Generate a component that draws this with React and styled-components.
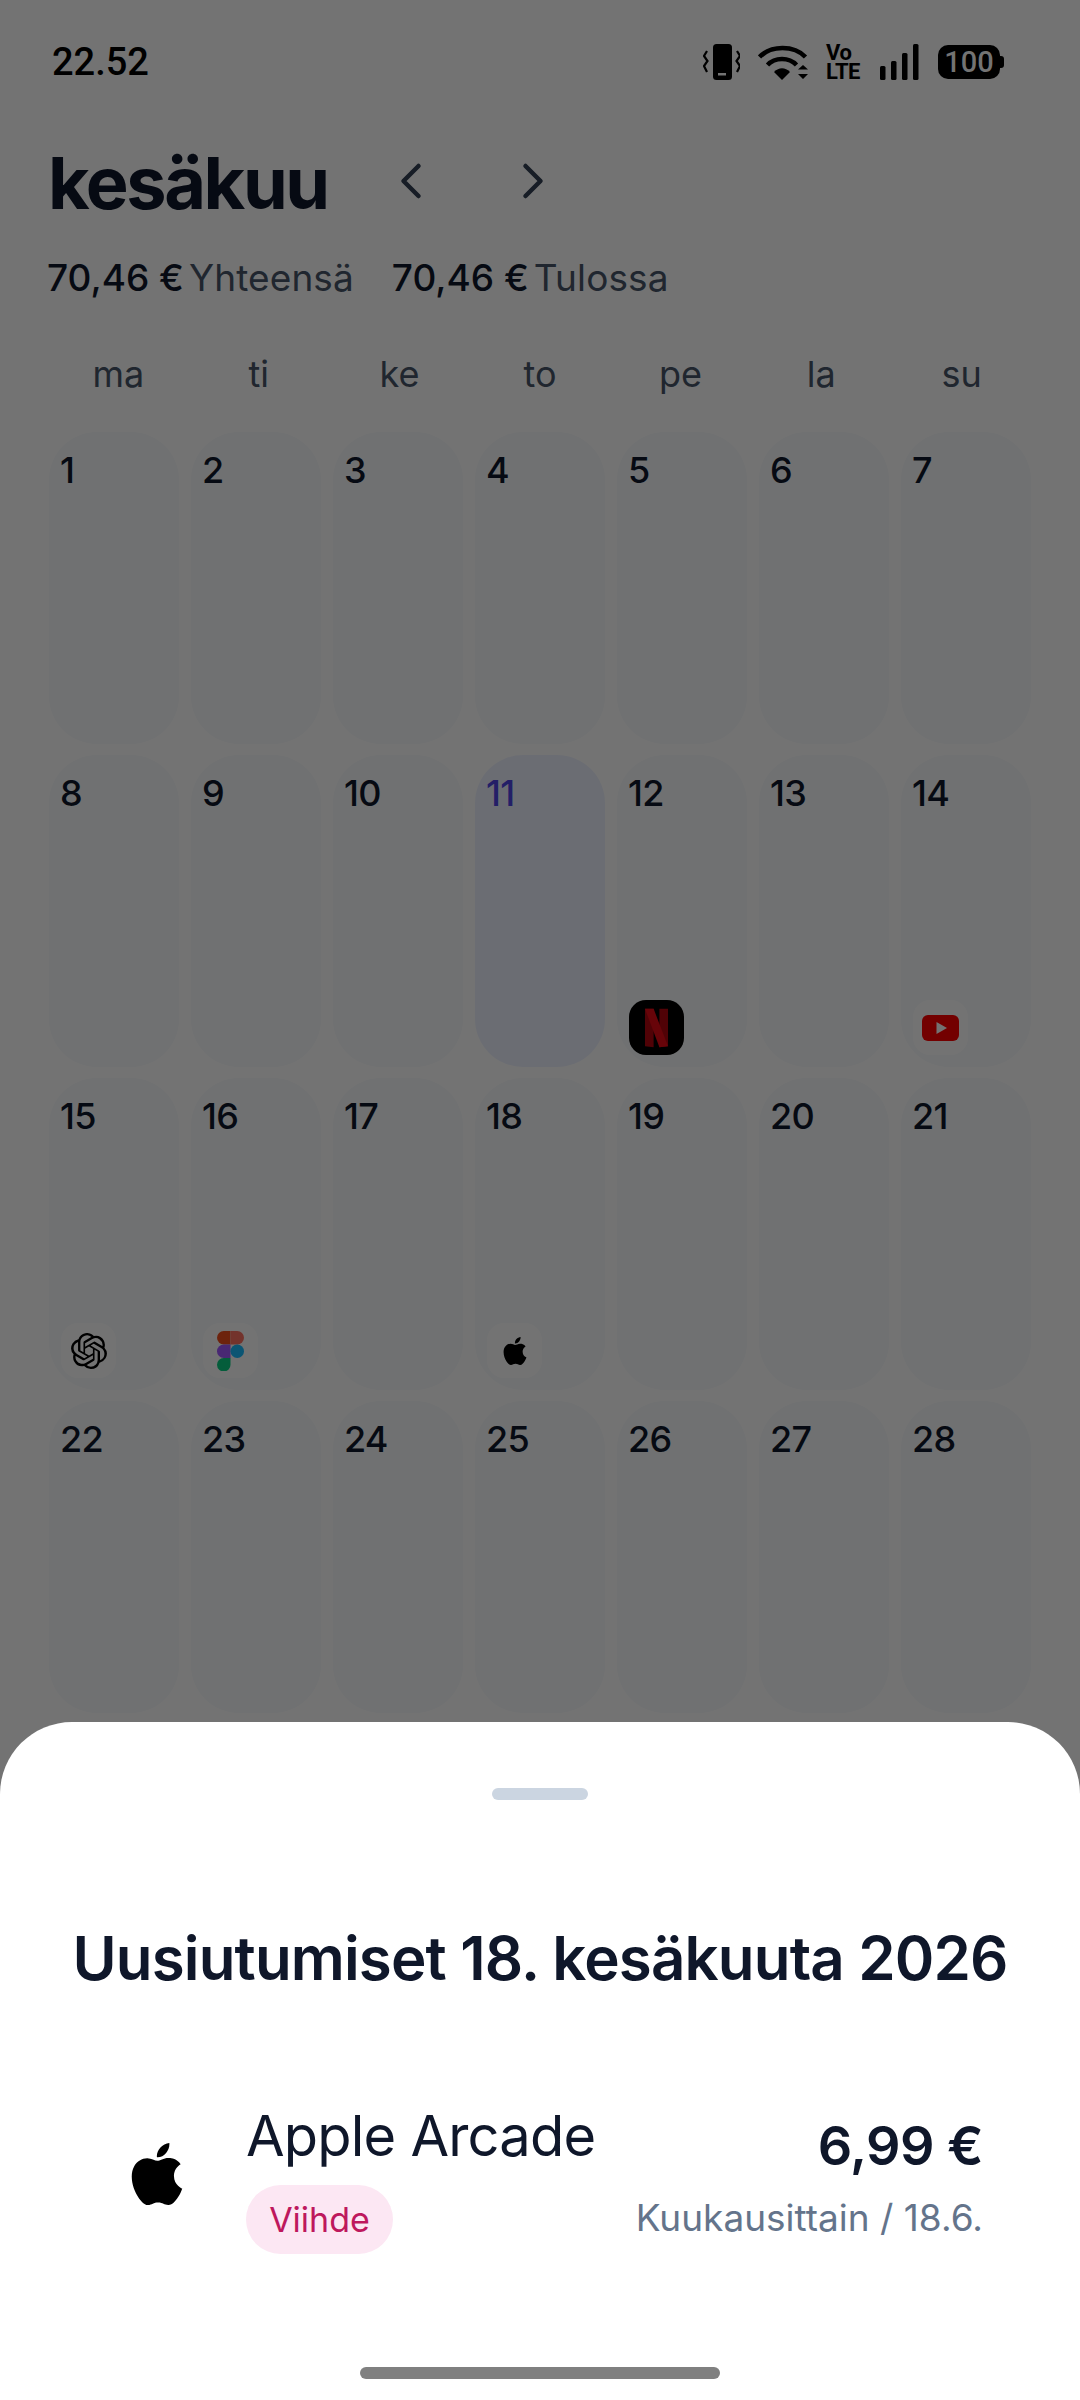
import React from 'react'
import styled, { createGlobalStyle } from 'styled-components'
import { ChevronLeft, ChevronRight } from 'lucide-react'
import { SiApple, SiOpenai } from 'react-icons/si'

const GlobalStyle = createGlobalStyle`
  html, body { margin: 0; padding: 0; background: #fff; }
  * { box-sizing: border-box; }
`

const Screen = styled.div`
  position: relative;
  width: 1080px;
  height: 2400px;
  overflow: hidden;
  background: #fff;
  font-family: Inter, "Noto Sans", sans-serif;
  color: #0f172a;
`

// sits above the dimmed backdrop, the system bar is not dimmed
const StatusBar = styled.div`
  position: relative;
  z-index: 1;
  display: flex;
  align-items: center;
  justify-content: space-between;
  height: 124px;
  padding: 0 76px 0 52px;
`

const Time = styled.span`
  font-family: Roboto, sans-serif;
  font-size: 38px;
  font-weight: 500;
  color: #000;
`

const StatusIcons = styled.div`
  display: flex;
  align-items: center;
  gap: 18px;
  color: #000;
`

const VoLte = styled.span`
  display: flex;
  flex-direction: column;
  align-items: flex-start;
  font-family: Roboto, sans-serif;
  font-size: 22px;
  font-weight: 700;
  line-height: 19px;
  letter-spacing: -0.5px;
  width: 36px;
`

const Battery = styled.span`
  position: relative;
  display: flex;
  align-items: center;
  justify-content: center;
  width: 62px;
  height: 34px;
  margin: 0 4px 0 1px;
  border-radius: 10px;
  background: #000;
  color: #737373;
  font-family: Roboto, sans-serif;
  font-size: 29px;
  font-weight: 500;

  &::after {
    content: '';
    position: absolute;
    right: -4px;
    top: 11px;
    width: 4px;
    height: 12px;
    border-radius: 0 3px 3px 0;
    background: #000;
  }
`

const MonthRow = styled.div`
  display: flex;
  align-items: center;
  height: 116px;
  padding-left: 48px;
`

const MonthTitle = styled.h1`
  width: 333px;
  margin: 0;
  font-size: 72px;
  font-weight: 700;
  letter-spacing: -2.4px;
  color: #0f172a;
`

const NavButton = styled.span`
  display: flex;
  width: 122px;
  margin-top: -2px;
  color: #334155;
`

const Summary = styled.div`
  display: flex;
  gap: 38px;
  height: 56px;
  padding: 14px 0 0 47px;
  font-size: 37px;
  line-height: 48px;
`

const SummaryItem = styled.div`
  display: flex;
  gap: 5px;
`

const Amount = styled.span`
  font-weight: 500;
`

const SummaryLabel = styled.span`
  color: #475569;
  letter-spacing: 0.1px;
`

const WeekRow = styled.div`
  display: grid;
  grid-template-columns: repeat(7, 1fr);
  height: 136px;
  padding: 56px 48px 0;
`

const WeekDay = styled.span`
  font-size: 36px;
  line-height: 44px;
  text-align: center;
  color: #475569;
`

const CalendarGrid = styled.div`
  display: grid;
  grid-template-columns: repeat(7, 130px);
  grid-auto-rows: 312px;
  gap: 11px 12px;
  padding-left: 49px;
`

const DayCell = styled.div`
  display: flex;
  flex-direction: column;
  justify-content: space-between;
  padding: 12px;
  border-radius: 48px;
  background: ${p => (p.$today ? '#eef2ff' : '#f8fafc')};
`

const DayNumber = styled.span`
  margin: 6px 0 0 -1px;
  font-size: 36px;
  font-weight: 500;
  line-height: 40px;
  letter-spacing: -0.8px;
  color: ${p => (p.$today ? '#4f46e5' : '#0f172a')};
`

const IconTile = styled.span`
  display: flex;
  align-items: center;
  justify-content: center;
  width: 55px;
  height: 55px;
  border-radius: 17px;
  background: ${p => p.$bg || '#ffffff'};
  color: #000;
`

const Backdrop = styled.div`
  position: absolute;
  inset: 0;
  background: rgba(0, 0, 0, 0.55);
`

const Sheet = styled.section`
  position: absolute;
  left: 0;
  right: 0;
  bottom: 0;
  display: flex;
  flex-direction: column;
  height: 678px;
  border-radius: 72px 72px 0 0;
  background: #fff;
`

const Handle = styled.div`
  align-self: center;
  width: 96px;
  height: 12px;
  margin-top: 66px;
  border-radius: 6px;
  background: #cbd5e1;
`

const SheetTitle = styled.h2`
  margin: 122px 0 0;
  font-size: 60px;
  font-weight: 575;
  line-height: 72px;
  letter-spacing: -0.85px;
  text-align: center;
  color: #0f172a;
`

const RenewalRow = styled.div`
  display: flex;
  align-items: flex-start;
  margin-top: 109px;
  padding: 0 97px 0 126px;
`

const RenewalIcon = styled.span`
  display: flex;
  width: 120px;
  margin-top: 40px;
  color: #000;
`

const RenewalInfo = styled.div`
  display: flex;
  flex-direction: column;
  align-items: flex-start;
`

const RenewalName = styled.span`
  font-size: 56px;
  line-height: 66px;
  letter-spacing: -0.8px;
  color: #0f172a;
`

const CategoryPill = styled.span`
  display: flex;
  align-items: center;
  justify-content: center;
  width: 147px;
  height: 69px;
  margin-top: 16px;
  border-radius: 35px;
  background: #fce7f3;
  color: #be185d;
  font-size: 34px;
`

const PriceInfo = styled.div`
  display: flex;
  flex-direction: column;
  align-items: flex-end;
  margin-left: auto;
`

const Price = styled.span`
  font-size: 54px;
  font-weight: 600;
  line-height: 66px;
  margin-top: 10px;
  letter-spacing: -0.6px;
  color: #0f172a;
`

const Cycle = styled.span`
  margin-top: 17px;
  font-size: 37px;
  line-height: 44px;
  color: #64748b;
`

const HomeBar = styled.div`
  align-self: center;
  width: 360px;
  height: 12px;
  margin-top: auto;
  margin-bottom: 21px;
  border-radius: 6px;
  background: #808080;
`

const VibrateIcon = () => (
  <svg width="37" height="36" viewBox="0 0 37 36">
    <rect x="10" y="0" width="19" height="36" rx="3.500" fill="currentColor" />
    <rect x="15" y="29" width="8" height="2.500" fill="#737373" />
    <path d="M4 7 L1 12 L4.500 17 L1 22 L4 28 M34 7 L37 12 L33.500 17 L37 22 L34 28" fill="none" stroke="currentColor" strokeWidth="2.200" />
  </svg>
)

const WifiIcon = () => (
  <svg width="50" height="37" viewBox="0 0 50 37">
    <path d="M1.500 13 C 13 1, 36 1, 47.500 13" fill="none" stroke="currentColor" strokeWidth="4.500" />
    <path d="M9.500 21 C 17 13, 31 13, 38.500 21" fill="none" stroke="currentColor" strokeWidth="4.500" />
    <path d="M16 28 L24 36 L32 28 C 27 23, 21 23, 16 28 Z" fill="currentColor" />
    <path d="M40 25.500 L45 21 L50 25.500 Z M40 30 L50 30 L45 35 Z" fill="currentColor" />
  </svg>
)

const SignalIcon = () => (
  <svg width="39" height="36" viewBox="0 0 39 36">
    <rect x="0" y="22" width="5.500" height="14" rx="1.500" fill="currentColor" />
    <rect x="11" y="17" width="5.500" height="19" rx="1.500" fill="currentColor" />
    <rect x="22" y="9" width="5.500" height="27" rx="1.500" fill="currentColor" />
    <rect x="33" y="0" width="5.500" height="36" rx="1.500" fill="currentColor" />
  </svg>
)

const NetflixLogo = () => (
  <svg width="23" height="40" viewBox="0 0 24 40">
    <path d="M0 0 H9 V40 L0 39 Z" fill="#b1060f" />
    <path d="M15 0 H24 V39 L15 40 Z" fill="#b1060f" />
    <path d="M0 0 H9 L24 39 L15 40 Z" fill="#e50914" />
  </svg>
)

const YoutubeLogo = () => (
  <svg width="37" height="26" viewBox="0 0 37 26">
    <rect width="37" height="26" rx="6" fill="#ff0000" />
    <path d="M14.500 7 L25 13 L14.500 19 Z" fill="#fff" />
  </svg>
)

const FigmaLogo = () => (
  <svg width="27" height="40" viewBox="0 0 27 40">
    <path d="M13.500 0 H6.750 a6.750 6.750 0 0 0 0 13.500 H13.500 Z" fill="#f24e1e" />
    <path d="M13.500 0 H20.250 a6.750 6.750 0 0 1 0 13.500 H13.500 Z" fill="#ff7262" />
    <path d="M13.500 13.500 H6.750 a6.750 6.750 0 0 0 0 13.500 H13.500 Z" fill="#a259ff" />
    <circle cx="20.250" cy="20.250" r="6.750" fill="#1abcfe" />
    <path d="M6.750 27 H13.500 V33.250 a6.750 6.750 0 1 1 -6.750 -6.250 Z" fill="#0acf83" />
  </svg>
)

const weekDays = ['ma', 'ti', 'ke', 'to', 'pe', 'la', 'su']

const renewals = {
  12: { bg: '#000000', icon: <NetflixLogo /> },
  14: { icon: <YoutubeLogo /> },
  15: { icon: <SiOpenai size={36} /> },
  16: { icon: <FigmaLogo /> },
  18: { icon: <SiApple size={28} /> },
}

const days = Array.from({ length: 30 }, (_, i) => i + 1)

const App = () => (
  <Screen>
    <GlobalStyle />
    <StatusBar>
      <Time>22.52</Time>
      <StatusIcons>
        <VibrateIcon />
        <WifiIcon />
        <VoLte><span>Vo</span><span>LTE</span></VoLte>
        <SignalIcon />
        <Battery>100</Battery>
      </StatusIcons>
    </StatusBar>
    <MonthRow>
      <MonthTitle>kesäkuu</MonthTitle>
      <NavButton><ChevronLeft size={60} strokeWidth={1.8} /></NavButton>
      <NavButton><ChevronRight size={60} strokeWidth={1.8} /></NavButton>
    </MonthRow>
    <Summary>
      <SummaryItem>
        <Amount>70,46 €</Amount>
        <SummaryLabel>Yhteensä</SummaryLabel>
      </SummaryItem>
      <SummaryItem>
        <Amount>70,46 €</Amount>
        <SummaryLabel>Tulossa</SummaryLabel>
      </SummaryItem>
    </Summary>
    <WeekRow>
      {weekDays.map(d => <WeekDay key={d}>{d}</WeekDay>)}
    </WeekRow>
    <CalendarGrid>
      {days.map(day => (
        <DayCell key={day} $today={day === 11}>
          <DayNumber $today={day === 11}>{day}</DayNumber>
          {renewals[day] && <IconTile $bg={renewals[day].bg}>{renewals[day].icon}</IconTile>}
        </DayCell>
      ))}
    </CalendarGrid>
    <Backdrop />
    <Sheet>
      <Handle />
      <SheetTitle>Uusiutumiset 18. kesäkuuta 2026</SheetTitle>
      <RenewalRow>
        <RenewalIcon><SiApple size={62} /></RenewalIcon>
        <RenewalInfo>
          <RenewalName>Apple Arcade</RenewalName>
          <CategoryPill>Viihde</CategoryPill>
        </RenewalInfo>
        <PriceInfo>
          <Price>6,99 €</Price>
          <Cycle>Kuukausittain / 18.6.</Cycle>
        </PriceInfo>
      </RenewalRow>
      <HomeBar />
    </Sheet>
  </Screen>
)

export default App
